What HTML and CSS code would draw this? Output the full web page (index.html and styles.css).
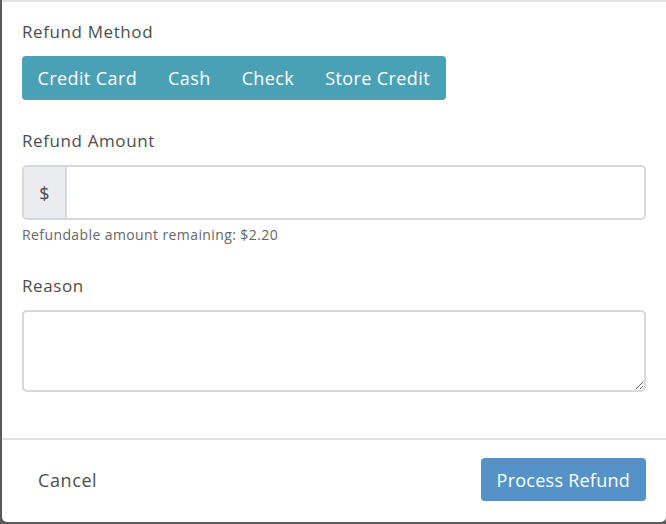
FILE: index.html
```html
<!DOCTYPE html>
<html lang="en">
<head>
    <meta charset="UTF-8">
    <title>Refund</title>
    <link rel="stylesheet" href="styles.css">
</head>
<body>
    <div class="modal">
        <div class="modal-body">
            <div class="form-group">
                <label class="form-label">Refund Method</label>
                <div class="btn-group">
                    <button class="method-btn">Credit Card</button>
                    <button class="method-btn">Cash</button>
                    <button class="method-btn">Check</button>
                    <button class="method-btn">Store Credit</button>
                </div>
            </div>

            <div class="form-group amount-group">
                <label class="form-label">Refund Amount</label>
                <div class="input-group">
                    <span class="input-addon">$</span>
                    <input type="text" class="input-field">
                </div>
                <div class="help-text">Refundable amount remaining: $2.20</div>
            </div>

            <div class="form-group">
                <label class="form-label">Reason</label>
                <textarea class="reason-field"></textarea>
            </div>
        </div>

        <div class="modal-footer">
            <button class="cancel-btn">Cancel</button>
            <button class="submit-btn">Process Refund</button>
        </div>
    </div>
</body>
</html>
```

FILE: styles.css
```css
/* General */
body {
    margin: 0;
    background-color: #5a5a5a;
    font-family: "Open Sans", Lato, sans-serif;
    color: #4a4a4a;
}

.modal {
    margin-left: 2px;
    height: 520px;
    background-color: #ffffff;
    border-top: 2px solid #e3e3e3;
    border-radius: 0 0 5px 5px;
}

/* Body */
.modal-body {
    padding: 18px 20px 0 20px;
    border-bottom: 2px solid #e1e1e1;
    height: 418px;
}

.form-group {
    margin-bottom: 29px;
}

.amount-group {
    margin-bottom: 30px;
}

.form-label {
    display: block;
    font-size: 17px;
    letter-spacing: 0.6px;
    line-height: 24px;
    margin-bottom: 12px;
    color: #4d4d4d;
}

.btn-group {
    display: inline-flex;
    background-color: #4aa1b5;
    border-radius: 4px;
    height: 44px;
}

.method-btn {
    background: none;
    border: none;
    color: #ffffff;
    font-family: inherit;
    font-size: 18px;
    letter-spacing: 0.4px;
    padding: 0 15.5px;
}

.input-group {
    display: flex;
    height: 55px;
    border: 2px solid #d5d9dc;
    border-radius: 5px;
    box-sizing: border-box;
    overflow: hidden;
}

.input-addon {
    width: 41px;
    display: flex;
    align-items: center;
    justify-content: center;
    background-color: #eaecef;
    border-right: 2px solid #d5d9dc;
    font-size: 18px;
    color: #4a4a4a;
}

.input-field {
    flex: 1;
    border: none;
    outline: none;
}

.help-text {
    margin-top: 6px;
    font-size: 14px;
    letter-spacing: 0.4px;
    line-height: 18px;
    color: #666666;
}

.reason-field {
    display: block;
    width: 100%;
    height: 82px;
    box-sizing: border-box;
    border: 2px solid #d5d9dc;
    border-radius: 5px;
    resize: vertical;
}

/* Footer */
.modal-footer {
    display: flex;
    justify-content: space-between;
    align-items: center;
    padding: 18px 20px 0 20px;
}

.cancel-btn {
    background: none;
    border: none;
    font-family: inherit;
    font-size: 18px;
    letter-spacing: 0.6px;
    color: #4d4d4d;
    padding: 0 16px;
}

.submit-btn {
    height: 43px;
    padding: 0 16px;
    background-color: #5592c8;
    border: none;
    border-radius: 4px;
    color: #ffffff;
    font-family: inherit;
    font-size: 18px;
    letter-spacing: 0.25px;
}
```
